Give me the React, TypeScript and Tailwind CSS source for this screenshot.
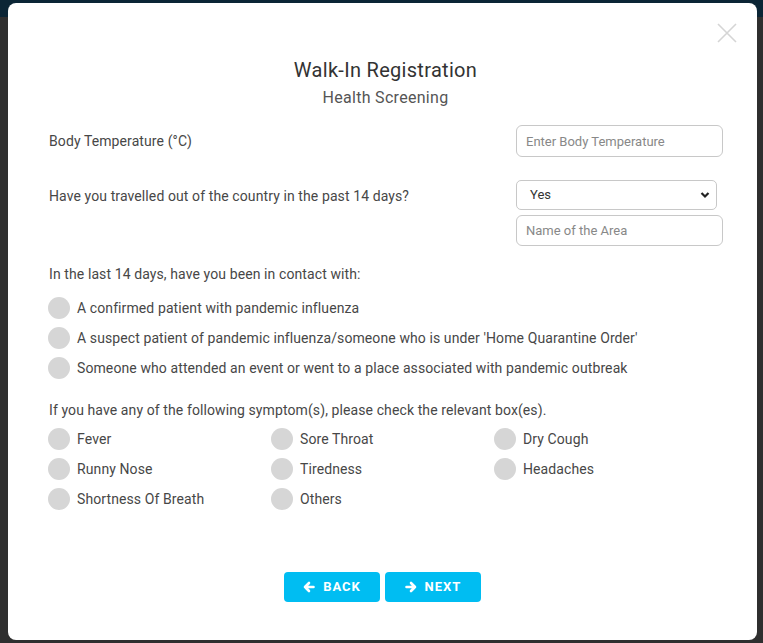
import { useState } from "react";

const contacts = [
  "A confirmed patient with pandemic influenza",
  "A suspect patient of pandemic influenza/someone who is under 'Home Quarantine Order'",
  "Someone who attended an event or went to a place associated with pandemic outbreak",
];

const symptoms = [
  "Fever",
  "Sore Throat",
  "Dry Cough",
  "Runny Nose",
  "Tiredness",
  "Headaches",
  "Shortness Of Breath",
  "Others",
];

function Circle({ label }: { label: string }) {
  const [on, setOn] = useState(false);
  return (
    <label className="flex items-center gap-[7px] h-[30px] cursor-pointer" onClick={() => setOn(!on)}>
      <span className={`w-[22px] h-[22px] rounded-full shrink-0 ${on ? "bg-[#00bdf2]" : "bg-[#d6d6d6]"}`} />
      <span className="text-[14px] text-[#474747] tracking-[0.1px]">{label}</span>
    </label>
  );
}

export default function App() {
  return (
    <div className="relative w-[763px] h-[643px] overflow-hidden bg-[#2f2f2f] font-['Roboto',sans-serif]">
      {/* backdrop nav */}
      <div className="h-[17px] bg-[#0b2535]" />

      {/* modal */}
      <div className="absolute left-[8px] top-[3px] w-[749px] h-[637px] bg-white rounded-[8px] pt-[54px] pl-[40px] pr-[34px]">
        <button className="absolute right-[19px] top-[19px] w-[22px] h-[22px] text-[#d5d5d5]">
          <svg viewBox="0 0 22 22" width="22" height="22" fill="none" stroke="currentColor" strokeWidth="1.6">
            <path d="M2 2 L20 20 M20 2 L2 20" />
          </svg>
        </button>

        <div className="text-center">
          <h1 className="text-[20px] leading-[26px] text-[#333] tracking-[0.3px]">Walk-In Registration</h1>
          <h2 className="text-[16px] leading-[20px] text-[#555] mt-[5px] tracking-[0.3px]">Health Screening</h2>
        </div>

        <div className="flex justify-between items-center mt-[17px]">
          <span className="text-[14px] text-[#474747] pl-[1px] tracking-[0.1px]">Body Temperature (°C)</span>
          <input
            placeholder="Enter Body Temperature"
            className="w-[207px] h-[32px] border border-[#c8c8c8] rounded-[6px] px-[9px] text-[13px] text-[#444] placeholder:text-[#888] outline-none"
          />
        </div>

        <div className="flex justify-between mt-[23px]">
          <span className="text-[14px] text-[#474747] pl-[1px] pt-[6px] tracking-[0.1px]">Have you travelled out of the country in the past 14 days?</span>
          <div className="flex flex-col gap-[5px] w-[207px]">
            <div className="relative w-[201px] h-[30px] border border-[#c8c8c8] rounded-[5px] flex items-center px-[13px] text-[13px] text-[#333]">
              Yes
              <svg className="absolute right-[6px] top-[10px]" width="10" height="8" viewBox="0 0 10 8" fill="none" stroke="#222" strokeWidth="2.2">
                <path d="M1.5 2 L5 5.5 L8.5 2" />
              </svg>
            </div>
            <input
              placeholder="Name of the Area"
              className="w-[207px] h-[31px] border border-[#c8c8c8] rounded-[6px] px-[9px] text-[13px] text-[#444] placeholder:text-[#888] outline-none"
            />
          </div>
        </div>

        <p className="text-[14px] text-[#474747] pl-[1px] mt-[18px] tracking-[0.1px]">In the last 14 days, have you been in contact with:</p>
        <div className="flex flex-col mt-[8px]">
          {contacts.map((c) => (
            <Circle key={c} label={c} />
          ))}
        </div>

        <p className="text-[14px] text-[#474747] pl-[1px] mt-[17px] tracking-[0.1px]">If you have any of the following symptom(s), please check the relevant box(es).</p>
        <div className="grid grid-cols-[223px_223px_223px] mt-[3px]">
          {symptoms.map((s) => (
            <Circle key={s} label={s} />
          ))}
        </div>

        <div className="flex justify-center gap-[5px] mt-[58px] pr-[6px]">
          <button className="w-[96px] h-[30px] rounded-[4px] bg-[#00bdf2] text-white text-[13px] font-bold tracking-[1px] flex items-center justify-center gap-[8px]">
            <svg width="12" height="12" viewBox="0 0 12 12" fill="none" stroke="white" strokeWidth="2.6" strokeLinecap="round" strokeLinejoin="round">
              <path d="M10.5 6 H2 M6 2 L2 6 L6 10" />
            </svg>
            BACK
          </button>
          <button className="w-[96px] h-[30px] rounded-[4px] bg-[#00bdf2] text-white text-[13px] font-bold tracking-[1px] flex items-center justify-center gap-[8px]">
            <svg width="12" height="12" viewBox="0 0 12 12" fill="none" stroke="white" strokeWidth="2.6" strokeLinecap="round" strokeLinejoin="round">
              <path d="M1.5 6 H10 M6 2 L10 6 L6 10" />
            </svg>
            NEXT
          </button>
        </div>
      </div>
    </div>
  );
}
